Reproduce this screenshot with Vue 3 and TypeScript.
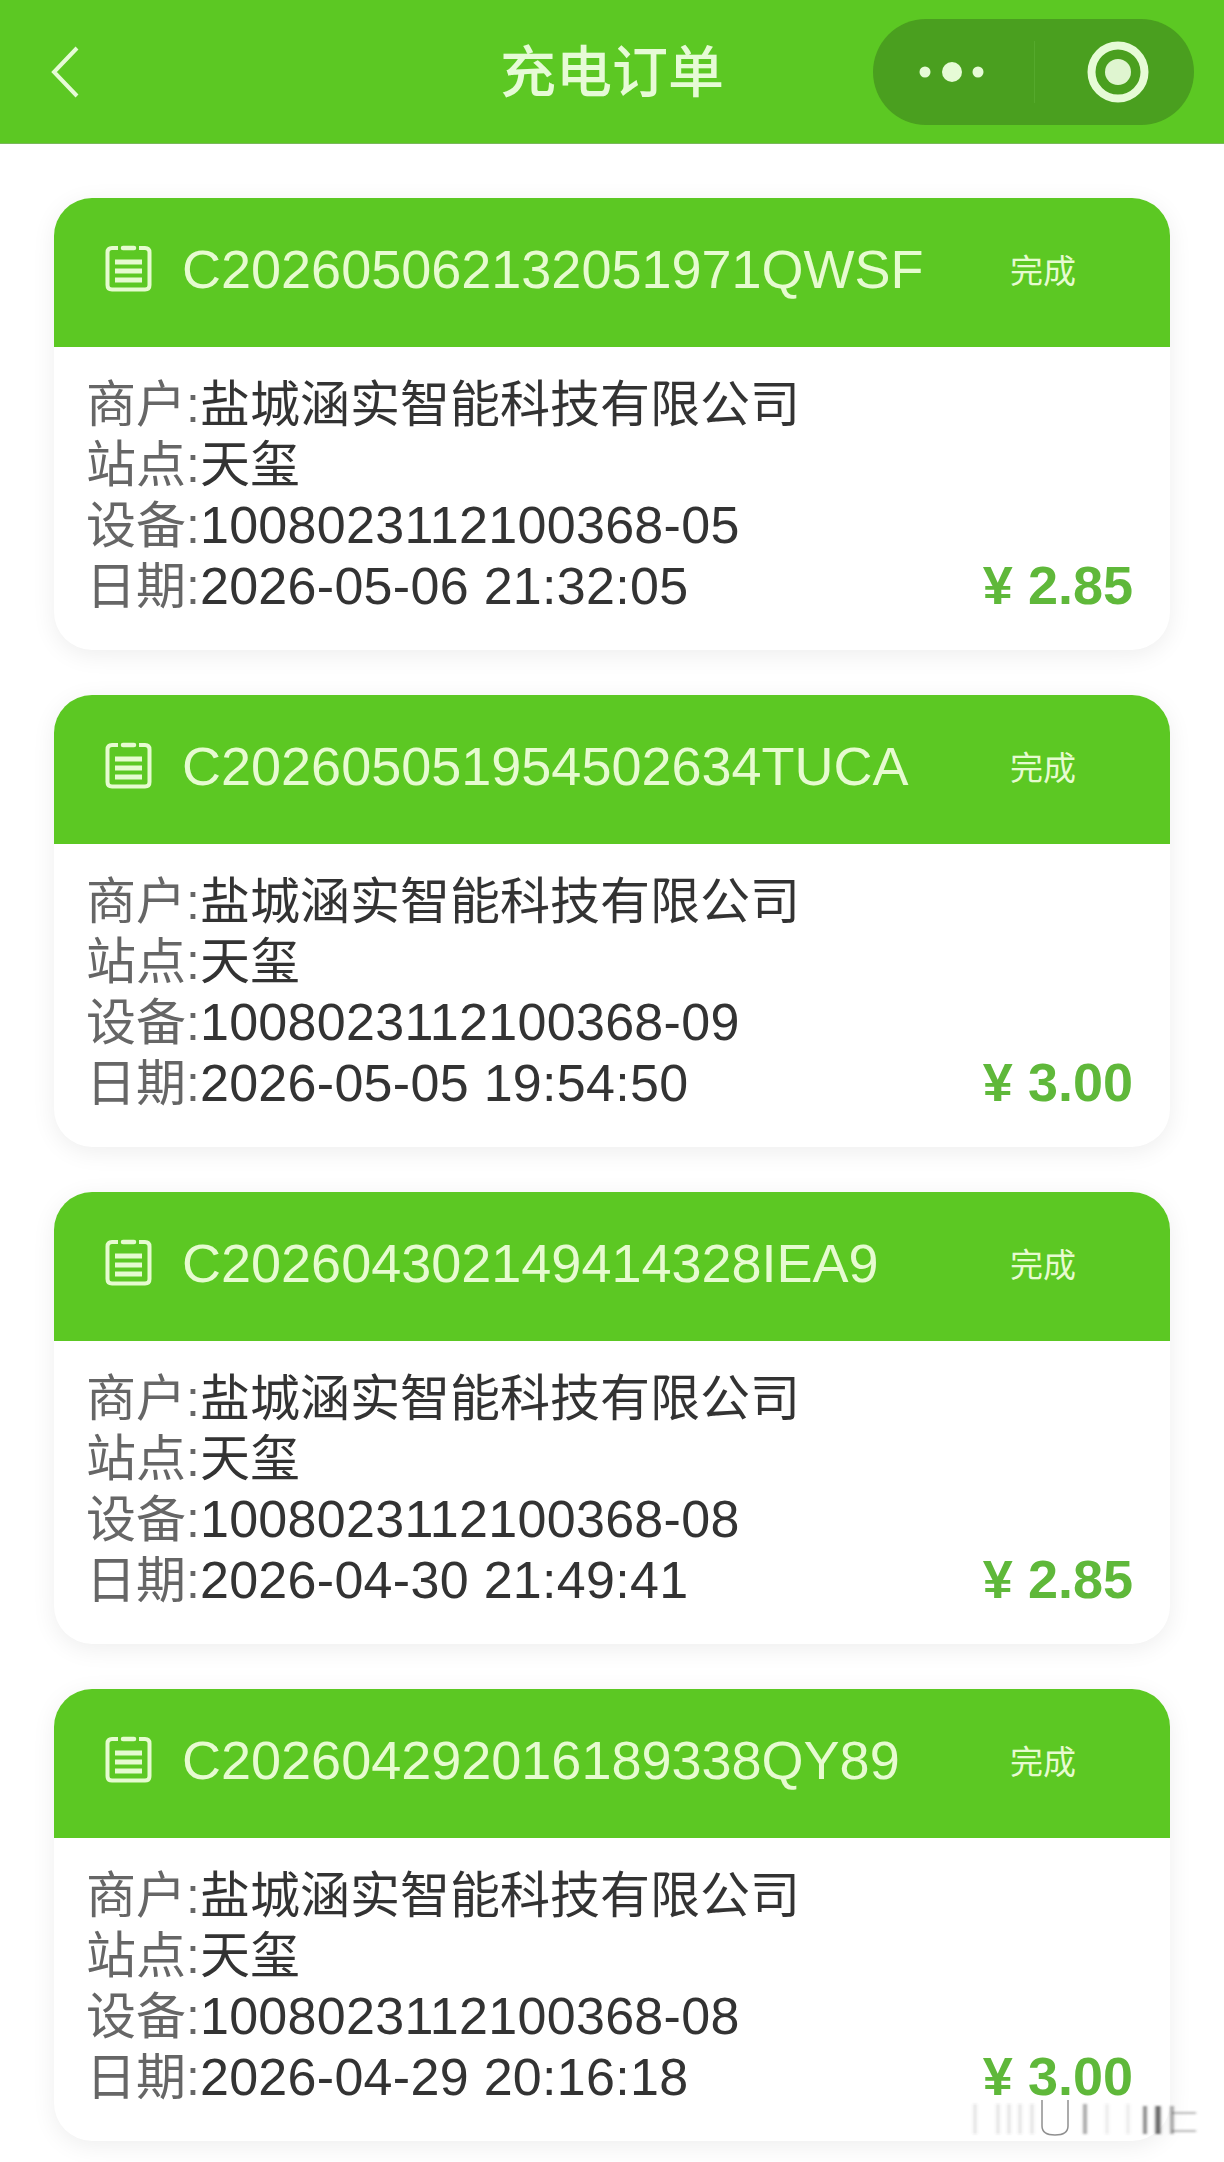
<script setup lang="ts">
interface Order {
  no: string
  device: string
  date: string
  amount: string
}

const orders: Order[] = [
  { no: 'C202605062132051971QWSF', device: '1008023112100368-05', date: '2026-05-06 21:32:05', amount: '2.85' },
  { no: 'C202605051954502634TUCA', device: '1008023112100368-09', date: '2026-05-05 19:54:50', amount: '3.00' },
  { no: 'C202604302149414328IEA9', device: '1008023112100368-08', date: '2026-04-30 21:49:41', amount: '2.85' },
  { no: 'C202604292016189338QY89', device: '1008023112100368-08', date: '2026-04-29 20:16:18', amount: '3.00' },
]
</script>

<template>
  <div class="page">
    <header class="nav">
      <svg class="back" width="30" height="54" viewBox="0 0 30 54">
        <path d="M27 3 L4 27 L27 51" fill="none" stroke="#e6fbd6" stroke-width="4" />
      </svg>
      <h1 class="title">充电订单</h1>
      <div class="capsule">
        <svg class="more" width="70" height="24" viewBox="0 0 70 24">
          <circle cx="8" cy="12" r="5.5" fill="#e6fbd6" />
          <circle cx="35" cy="12" r="10" fill="#e6fbd6" />
          <circle cx="61" cy="12" r="5.5" fill="#e6fbd6" />
        </svg>
        <span class="divider"></span>
        <svg class="target" width="62" height="62" viewBox="0 0 62 62">
          <circle cx="31" cy="31" r="26.5" fill="none" stroke="#e6fbd6" stroke-width="8" />
          <circle cx="31" cy="31" r="13" fill="#dff5d0" />
        </svg>
      </div>
    </header>

    <main class="list">
      <section v-for="order in orders" :key="order.no" class="card">
        <div class="card-head">
          <svg class="doc" width="47" height="47" viewBox="0 0 47 47">
            <path d="M13 3 H7 Q2.5 3 2.5 7.5 V40 Q2.5 44.5 7 44.5 H40 Q44.5 44.5 44.5 40 V7.5 Q44.5 3 40 3 H34" fill="none" stroke="#e6fbd0" stroke-width="4" />
            <path d="M18 3 H29" stroke="#e6fbd0" stroke-width="4.5" stroke-linecap="round" />
            <path d="M10 17 H37 M10 26 H37 M10 35 H37" stroke="#e6fbd0" stroke-width="5" />
          </svg>
          <span class="order-no">{{ order.no }}</span>
          <span class="status">完成</span>
        </div>
        <div class="card-body">
          <div class="row"><span class="label">商户:</span><span class="value">盐城涵实智能科技有限公司</span></div>
          <div class="row"><span class="label">站点:</span><span class="value">天玺</span></div>
          <div class="row"><span class="label">设备:</span><span class="value num">{{ order.device }}</span></div>
          <div class="row">
            <span class="label">日期:</span><span class="value num">{{ order.date }}</span>
            <span class="amount">¥ {{ order.amount }}</span>
          </div>
        </div>
      </section>
    </main>

    <svg class="watermark" width="240" height="44" viewBox="0 0 240 44">
      <defs>
        <filter id="smear" x="-5%" y="-20%" width="110%" height="140%"><feGaussianBlur stdDeviation="1.6 0.8" /></filter>
      </defs>
      <g filter="url(#smear)" fill="none" stroke="#444" stroke-width="3">
        <path d="M7 6 V36 M30 6 V36 M41 6 V36 M52 6 V36 M64 6 V36" opacity="0.16" />
        <path d="M117 6 V36" opacity="0.6" />
        <path d="M139 6 V36 M160 6 V36" opacity="0.12" />
        <path d="M177 8 V36" opacity="0.8" />
        <path d="M190 8 V36" stroke-width="5" opacity="0.85" />
        <path d="M204 8 V36" opacity="0.6" />
        <path d="M204 15 H228 M204 33 H228" stroke-width="1.5" opacity="0.5" />
      </g>
      <path d="M74 2 V28 Q74 37 87 37 Q100 37 100 28 V2" fill="none" stroke="#333" stroke-width="1.5" opacity="0.55" />
    </svg>
  </div>
</template>

<style scoped>
.page {
  position: relative;
  width: 1224px;
  height: 2162px;
  overflow: hidden;
  background: #fff;
  font-family: "Liberation Sans", "Noto Sans CJK SC", sans-serif;
}

.nav {
  position: relative;
  display: flex;
  align-items: center;
  justify-content: space-between;
  height: 144px;
  padding: 0 30px 0 50px;
  box-sizing: border-box;
  background: #5cc823;
  border-bottom: 1px solid #7ab85a;
}

.title {
  position: absolute;
  left: 0;
  right: 0;
  top: 35px;
  margin: 0;
  text-align: center;
  font-size: 56px;
  line-height: 76px;
  font-weight: 500;
  color: #e6fbd6;
}

.capsule {
  position: relative;
  display: flex;
  align-items: center;
  width: 321px;
  height: 106px;
  border-radius: 53px;
  background: #4a9f1f;
}

.more {
  margin-left: 44px;
}

.divider {
  width: 1px;
  height: 62px;
  margin-left: 47px;
  background: #55a92c;
}

.target {
  margin-left: 52px;
}

.list {
  display: flex;
  flex-direction: column;
  gap: 45px;
  padding: 54px 54px 0;
}

.card {
  height: 452px;
  border-radius: 38px;
  background: #fff;
  box-shadow: 0 5px 24px rgba(0, 0, 0, 0.07);
  overflow: hidden;
}

.card-head {
  display: flex;
  align-items: center;
  height: 149px;
  padding-left: 51px;
  padding-bottom: 8px;
  box-sizing: border-box;
  background: #5cc823;
  color: #e6fbd0;
}

.order-no {
  margin-left: 30px;
  font-size: 54px;
}

.status {
  position: absolute;
  left: 1010px;
  font-size: 33px;
}

.card-body {
  padding: 28px 37px 0 32px;
}

.row {
  display: flex;
  align-items: baseline;
  height: 60px;
  line-height: 60px;
  font-size: 50px;
}

.label {
  color: #666;
}

.value {
  color: #333;
}

.num {
  font-size: 52px;
  letter-spacing: 0.3px;
}

.amount {
  margin-left: auto;
  font-size: 54px;
  font-weight: 700;
  color: #5fb83a;
}

.watermark {
  position: absolute;
  left: 968px;
  top: 2098px;
}
</style>
